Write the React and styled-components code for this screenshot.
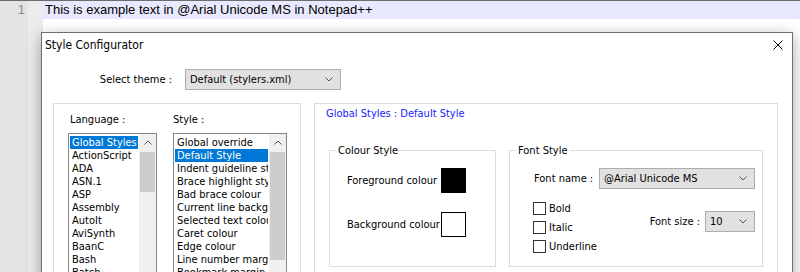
import React from 'react';
import styled, { createGlobalStyle } from 'styled-components';

const GlobalStyle = createGlobalStyle`
  html, body {
    margin: 0;
    padding: 0;
    background: #ffffff;
    overflow: hidden;
  }
  * {
    box-sizing: border-box;
  }
`;

const uiFont = `"DejaVu Sans Condensed", "DejaVu Sans", sans-serif`;

const Editor = styled.div`
  position: relative;
  display: flex;
  width: 800px;
  height: 272px;
  border-top: 1px solid #6d6d6d;
  overflow: hidden;
`;

const NumberMargin = styled.div`
  width: 28px;
  background: #e4e4e4;
  color: #8a8a8a;
  font: 13px/18px "Liberation Sans", Arial, sans-serif;
  text-align: right;
  padding-right: 3px;
`;

const FoldMargin = styled.div`
  width: 15px;
  background: #ececec;
`;

const TextArea = styled.div`
  flex: 1;
  background: #ffffff;
`;

const CurrentLine = styled.div`
  height: 18px;
  background: #e8e8ff;
  padding-left: 2px;
  font: 13px/18px "Liberation Sans", Arial, sans-serif;
  color: #000000;
  white-space: nowrap;
`;

const Dialog = styled.div`
  position: absolute;
  left: 41px;
  top: 31px;
  width: 752px;
  height: 320px;
  background: #ffffff;
  border: 1px solid #707070;
  box-shadow: 0 4px 14px rgba(0, 0, 0, 0.35);
  font-family: ${uiFont};
  font-stretch: condensed;
  font-size: 11px;
  color: #000000;
`;

const TitleBar = styled.div`
  display: flex;
  justify-content: space-between;
  align-items: flex-start;
  height: 25px;
  padding-left: 3px;
`;

const Title = styled.div`
  font-size: 12px;
  line-height: 25px;
`;

const CloseButton = styled.div`
  width: 10px;
  height: 10px;
  margin: 7px 9px 0 0;
  display: flex;
`;

const ThemeRow = styled.div`
  display: flex;
  align-items: center;
  gap: 13px;
  margin-top: 11px;
`;

const ThemeLabel = styled.div`
  width: 130px;
  text-align: right;
`;

const ComboBox = styled.div`
  display: flex;
  align-items: center;
  justify-content: space-between;
  width: ${(p) => p.$width}px;
  height: 21px;
  padding: 0 7px 0 4px;
  background: #e1e1e1;
  border: 1px solid #adadad;
  white-space: nowrap;
`;

const Panels = styled.div`
  display: flex;
  gap: 13px;
  margin-top: 13px;
  padding-left: 11px;
`;

const Panel = styled.div`
  width: ${(p) => p.$width}px;
  height: 200px;
  border: 1px solid #dcdcdc;
`;

const ListsPanel = styled(Panel)`
  display: flex;
  gap: 16px;
  padding: 9px 0 0 14px;
`;

const ListColumn = styled.div`
  display: flex;
  flex-direction: column;
  gap: 7px;
  width: ${(p) => p.$width}px;
`;

const ListLabel = styled.div`
  line-height: 13px;
  padding-left: ${(p) => p.$indent}px;
`;

const ListBox = styled.div`
  display: flex;
  height: 170px;
  border: 1px solid #828790;
  background: #ffffff;
`;

const Items = styled.div`
  flex: 1;
  min-width: 0;
  padding: 2px 1px 0 1px;
`;

const Item = styled.div`
  height: 13px;
  line-height: 13px;
  padding-left: 2px;
  white-space: nowrap;
  overflow: hidden;
  background: ${(p) => (p.$selected ? '#0078d7' : 'transparent')};
  color: ${(p) => (p.$selected ? '#ffffff' : '#000000')};
`;

const ScrollBar = styled.div`
  width: 17px;
  background: #f0f0f0;
  display: flex;
  flex-direction: column;
  align-items: center;
`;

const ScrollArrow = styled.div`
  height: 17px;
  width: 100%;
  display: flex;
  align-items: center;
  justify-content: center;
`;

const Thumb = styled.div`
  width: 15px;
  height: ${(p) => p.$height}px;
  margin-top: 1px;
  background: #cdcdcd;
`;

const StylePanel = styled(Panel)`
  padding: 3px 14px 0 11px;
`;

const Heading = styled.div`
  line-height: 13px;
  color: #1a1aff;
`;

const Groups = styled.div`
  display: flex;
  gap: 13px;
  margin-top: 30px;
  padding-left: 3px;
`;

const GroupBox = styled.div`
  position: relative;
  width: ${(p) => p.$width}px;
  height: 117px;
  border: 1px solid #dcdcdc;
`;

const GroupLabel = styled.div`
  position: absolute;
  top: -7px;
  left: 6px;
  padding: 0 2px;
  line-height: 13px;
  background: #ffffff;
`;

const ColourGrid = styled.div`
  display: grid;
  grid-template-columns: 94px 25px;
  grid-auto-rows: 25px;
  row-gap: 19px;
  align-items: center;
  padding: 17px 0 0 17px;
`;

const Swatch = styled.div`
  width: 25px;
  height: 25px;
  border: 1px solid #000000;
  background: ${(p) => p.$color};
`;

const FontBody = styled.div`
  padding: 17px 7px 0 23px;
`;

const FieldRow = styled.div`
  display: flex;
  align-items: center;
  gap: ${(p) => p.$gap}px;
  padding-left: 1px;
`;

const LowerRow = styled.div`
  display: flex;
  justify-content: space-between;
  align-items: flex-start;
  margin-top: 13px;
`;

const Checks = styled.div`
  display: flex;
  flex-direction: column;
  gap: 6px;
`;

const Check = styled.label`
  display: flex;
  align-items: center;
  gap: 3px;
  height: 13px;
`;

const CheckBox = styled.span`
  width: 13px;
  height: 13px;
  border: 1px solid #333333;
  background: #ffffff;
`;

const SizeRow = styled(FieldRow)`
  margin-top: 9px;
`;

const Chevron = ({ up }) => (
  <svg width="8" height="5" viewBox="0 0 8 5">
    <polyline
      points={up ? '0.5,4.5 4,1 7.5,4.5' : '0.5,0.5 4,4 7.5,0.5'}
      fill="none"
      stroke="#555555"
      strokeWidth="1"
    />
  </svg>
);

const languages = [
  'Global Styles', 'ActionScript', 'ADA', 'ASN.1', 'ASP', 'Assembly', 'AutoIt',
  'AviSynth', 'BaanC', 'Bash', 'Batch', 'Blitzbasic',
];

const styles = [
  'Global override', 'Default Style', 'Indent guideline style', 'Brace highlight style',
  'Bad brace colour', 'Current line background colour', 'Selected text colour',
  'Caret colour', 'Edge colour', 'Line number margin', 'Bookmark margin', 'Fold',
];

function List({ items, selected, thumb }) {
  return (
    <ListBox>
      <Items>
        {items.map((name) => (
          <Item key={name} $selected={name === selected}>{name}</Item>
        ))}
      </Items>
      <ScrollBar>
        <ScrollArrow><Chevron up /></ScrollArrow>
        <Thumb $height={thumb} />
      </ScrollBar>
    </ListBox>
  );
}

export default function App() {
  return (
    <>
      <GlobalStyle />
      <Editor>
        <NumberMargin>1</NumberMargin>
        <FoldMargin />
        <TextArea>
          <CurrentLine>This is example text in @Arial Unicode MS in Notepad++</CurrentLine>
        </TextArea>

        <Dialog>
          <TitleBar>
            <Title>Style Configurator</Title>
            <CloseButton>
              <svg width="10" height="10" viewBox="0 0 10 10">
                <path d="M0.5 0.5 L9.5 9.5 M9.5 0.5 L0.5 9.5" stroke="#000" strokeWidth="1" />
              </svg>
            </CloseButton>
          </TitleBar>

          <ThemeRow>
            <ThemeLabel>Select theme :</ThemeLabel>
            <ComboBox $width={156}>
              Default (stylers.xml)
              <Chevron />
            </ComboBox>
          </ThemeRow>

          <Panels>
            <ListsPanel $width={248}>
              <ListColumn $width={89}>
                <ListLabel $indent={2}>Language :</ListLabel>
                <List items={languages} selected="Global Styles" thumb={40} />
              </ListColumn>
              <ListColumn $width={114}>
                <ListLabel $indent={0}>Style :</ListLabel>
                <List items={styles} selected="Default Style" thumb={108} />
              </ListColumn>
            </ListsPanel>

            <StylePanel $width={464}>
              <Heading>Global Styles : Default Style</Heading>
              <Groups>
                <GroupBox $width={167}>
                  <GroupLabel>Colour Style</GroupLabel>
                  <ColourGrid>
                    <span>Foreground colour</span>
                    <Swatch $color="#000000" />
                    <span>Background colour</span>
                    <Swatch $color="#ffffff" />
                  </ColourGrid>
                </GroupBox>

                <GroupBox $width={254}>
                  <GroupLabel>Font Style</GroupLabel>
                  <FontBody>
                    <FieldRow $gap={0}>
                      <span style={{ width: 65 }}>Font name :</span>
                      <ComboBox $width={156}>
                        @Arial Unicode MS
                        <Chevron />
                      </ComboBox>
                    </FieldRow>
                    <LowerRow>
                      <Checks>
                        <Check><CheckBox />Bold</Check>
                        <Check><CheckBox />Italic</Check>
                        <Check><CheckBox />Underline</Check>
                      </Checks>
                      <SizeRow $gap={5}>
                        <span>Font size :</span>
                        <ComboBox $width={50}>
                          10
                          <Chevron />
                        </ComboBox>
                      </SizeRow>
                    </LowerRow>
                  </FontBody>
                </GroupBox>
              </Groups>
            </StylePanel>
          </Panels>
        </Dialog>
      </Editor>
    </>
  );
}
